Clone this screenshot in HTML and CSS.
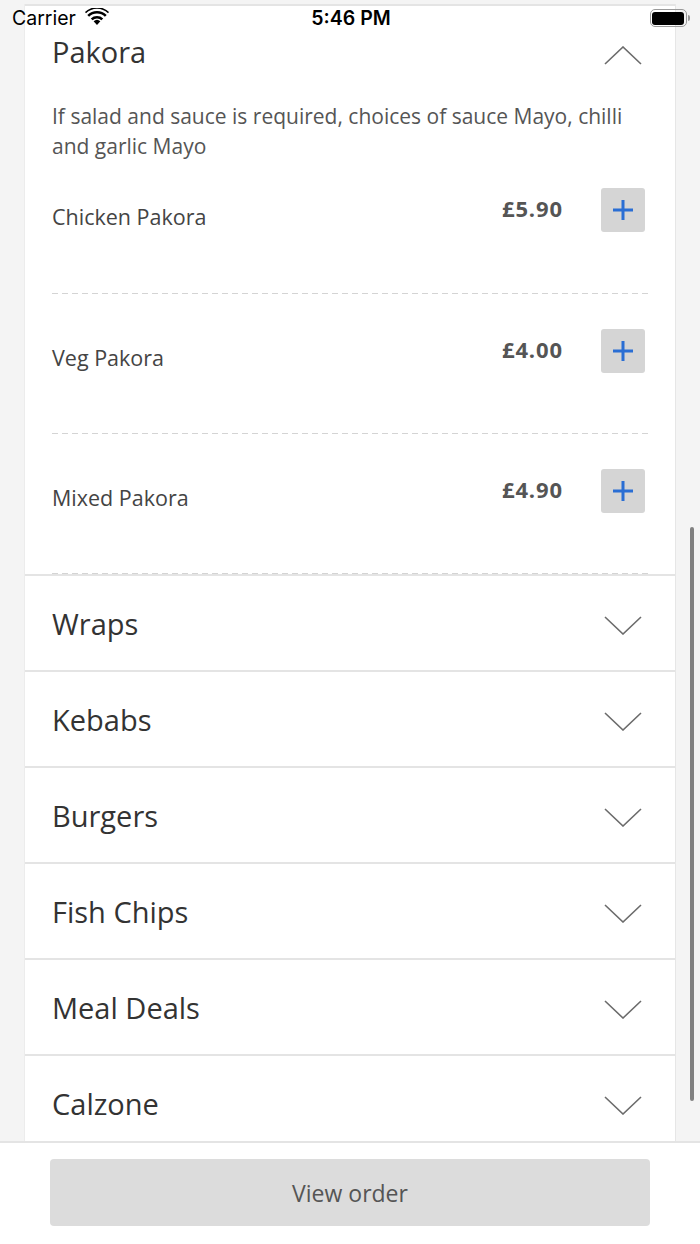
FILE: index.html
```html
<!DOCTYPE html>
<html>
<head>
<meta charset="utf-8">
<link rel="stylesheet" href="styles.css">
</head>
<body>
<div class="screen">
  <div class="scroll">
    <div class="menu">
      <section class="cat open">
        <div class="cat-head">
          <span class="cat-title">Pakora</span>
          <svg class="chev" width="38" height="19" viewBox="0 0 38 19"><path d="M1 18 L19 1 L37 18" fill="none" stroke="#6b6b6b" stroke-width="1.6"/></svg>
        </div>
        <p class="cat-desc">If salad and sauce is required, choices of sauce Mayo, chilli and garlic Mayo</p>
        <div class="items">
          <div class="item">
            <span class="item-name">Chicken Pakora</span>
            <span class="item-price">£5.90</span>
            <button class="add"><svg width="22" height="22" viewBox="0 0 22 22"><path d="M11 1v20M1 11h20" stroke="#2a6ed4" stroke-width="3"/></svg></button>
          </div>
          <div class="item">
            <span class="item-name">Veg Pakora</span>
            <span class="item-price">£4.00</span>
            <button class="add"><svg width="22" height="22" viewBox="0 0 22 22"><path d="M11 1v20M1 11h20" stroke="#2a6ed4" stroke-width="3"/></svg></button>
          </div>
          <div class="item">
            <span class="item-name">Mixed Pakora</span>
            <span class="item-price">£4.90</span>
            <button class="add"><svg width="22" height="22" viewBox="0 0 22 22"><path d="M11 1v20M1 11h20" stroke="#2a6ed4" stroke-width="3"/></svg></button>
          </div>
        </div>
      </section>
      <section class="cat"><div class="cat-head"><span class="cat-title">Wraps</span><svg class="chev" width="38" height="19" viewBox="0 0 38 19"><path d="M1 1 L19 18 L37 1" fill="none" stroke="#6b6b6b" stroke-width="1.6"/></svg></div></section>
      <section class="cat"><div class="cat-head"><span class="cat-title">Kebabs</span><svg class="chev" width="38" height="19" viewBox="0 0 38 19"><path d="M1 1 L19 18 L37 1" fill="none" stroke="#6b6b6b" stroke-width="1.6"/></svg></div></section>
      <section class="cat"><div class="cat-head"><span class="cat-title">Burgers</span><svg class="chev" width="38" height="19" viewBox="0 0 38 19"><path d="M1 1 L19 18 L37 1" fill="none" stroke="#6b6b6b" stroke-width="1.6"/></svg></div></section>
      <section class="cat"><div class="cat-head"><span class="cat-title">Fish Chips</span><svg class="chev" width="38" height="19" viewBox="0 0 38 19"><path d="M1 1 L19 18 L37 1" fill="none" stroke="#6b6b6b" stroke-width="1.6"/></svg></div></section>
      <section class="cat"><div class="cat-head"><span class="cat-title">Meal Deals</span><svg class="chev" width="38" height="19" viewBox="0 0 38 19"><path d="M1 1 L19 18 L37 1" fill="none" stroke="#6b6b6b" stroke-width="1.6"/></svg></div></section>
      <section class="cat"><div class="cat-head"><span class="cat-title">Calzone</span><svg class="chev" width="38" height="19" viewBox="0 0 38 19"><path d="M1 1 L19 18 L37 1" fill="none" stroke="#6b6b6b" stroke-width="1.6"/></svg></div></section>
    </div>
    <div class="scrollbar"></div>
  </div>
  <div class="footer">
    <button class="view-order">View order</button>
  </div>
  <div class="statusbar">
    <div class="sb-left">
      <span class="carrier">Carrier</span>
      <svg class="wifi" width="24" height="18" viewBox="0 0 24 18"><path d="M12 17 L8.6 13.3 A5 5 0 0 1 15.4 13.3 Z" fill="#000"/><path d="M5.8 10.4 A9 9 0 0 1 18.2 10.4 L16.4 12.3 A6.4 6.4 0 0 0 7.6 12.3 Z" fill="#000"/><path d="M2.3 6.9 A14 14 0 0 1 21.7 6.9 L19.9 8.8 A11.4 11.4 0 0 0 4.1 8.8 Z" fill="#000"/><path d="M0 4.1 A17 17 0 0 1 24 4.1 L23 5.2 A15.6 15.6 0 0 0 1 5.2 Z" fill="#000"/></svg>
    </div>
    <span class="time">5:46 PM</span>
    <div class="battery"><div class="batt-body"><div class="batt-fill"></div></div><div class="batt-nub"></div></div>
  </div>
</div>
</body>
</html>
```
FILE: styles.css
```css
* { box-sizing: border-box; }
html, body { margin: 0; padding: 0; }
body { background: #f4f4f4; font-family: "Open Sans", "Noto Sans", sans-serif; }
.screen { width: 700px; height: 1244px; display: flex; flex-direction: column; position: relative; overflow: hidden; }
.scroll { flex: 1; overflow: hidden; position: relative; padding: 4px 24px 0; }
.menu { background: #fff; border-left: 1px solid #ececec; border-right: 1px solid #e6e6e6; }
.cat { border-top: 2px solid #e4e4e4; }
.cat-head { height: 94px; display: flex; align-items: center; justify-content: space-between; padding: 0 33px 0 27px; }
.cat-title { font-size: 29px; color: #333; line-height: 1; }
.chev { display: block; margin-top: 5px; }
.open .cat-head { height: 90px; }
.open .chev { margin-top: 8px; }
.cat-desc { margin: 0; padding: 5px 27px 0; font-size: 21px; line-height: 30px; color: #555; }
.items { padding: 0 27px; }
.item { height: 140px; display: flex; align-items: flex-start; background-image: linear-gradient(to right, #d4d4d4 60%, transparent 60%); background-size: 10px 1px; background-repeat: repeat-x; background-position: left bottom; padding-top: 35px; }
.item:first-child { height: 133px; padding-top: 27px; }
.item-name { flex: 1; font-size: 21.5px; color: #444; margin-top: 14px; }
.item-price { font-size: 22px; letter-spacing: 0.9px; font-weight: 700; color: #555; margin-top: 5px; }
.add { width: 44px; height: 44px; margin-left: 38px; margin-right: 3px; border: none; border-radius: 3px; background: #d5d5d5; display: flex; align-items: center; justify-content: center; padding: 0; }
.add svg { display: block; }
.scrollbar { position: absolute; right: 6px; top: 527px; width: 4px; height: 574px; border-radius: 2px; background: #808080; }
.footer { height: 103px; background: #fff; border-top: 2px solid #e4e4e4; padding: 16px 50px 0; }
.view-order { width: 600px; height: 67px; border: none; border-radius: 4px; background: #dcdcdc; font-family: "Open Sans", sans-serif; font-size: 23px; color: #555; padding: 0; }
.statusbar { position: absolute; top: 0; left: 0; right: 0; height: 36px; display: flex; align-items: center; justify-content: space-between; padding: 0 10px 0 12px; font-family: Inter, "Liberation Sans", sans-serif; color: #000; }
.sb-left { display: flex; align-items: center; gap: 9px; width: 120px; }
.carrier { font-size: 19.5px; }
.wifi { display: block; margin-top: -3px; }
.time { font-weight: 600; font-size: 19.5px; margin-left: 0; }
.battery { width: 120px; display: flex; justify-content: flex-end; align-items: center; }
.batt-body { width: 37px; height: 18px; border: 1.5px solid #9a9a9a; border-radius: 5px; padding: 1.5px; }
.batt-fill { width: 100%; height: 100%; background: #000; border-radius: 3px; }
.batt-nub { width: 2px; height: 6px; background: #9a9a9a; border-radius: 0 2px 2px 0; margin-left: 1px; }
```
